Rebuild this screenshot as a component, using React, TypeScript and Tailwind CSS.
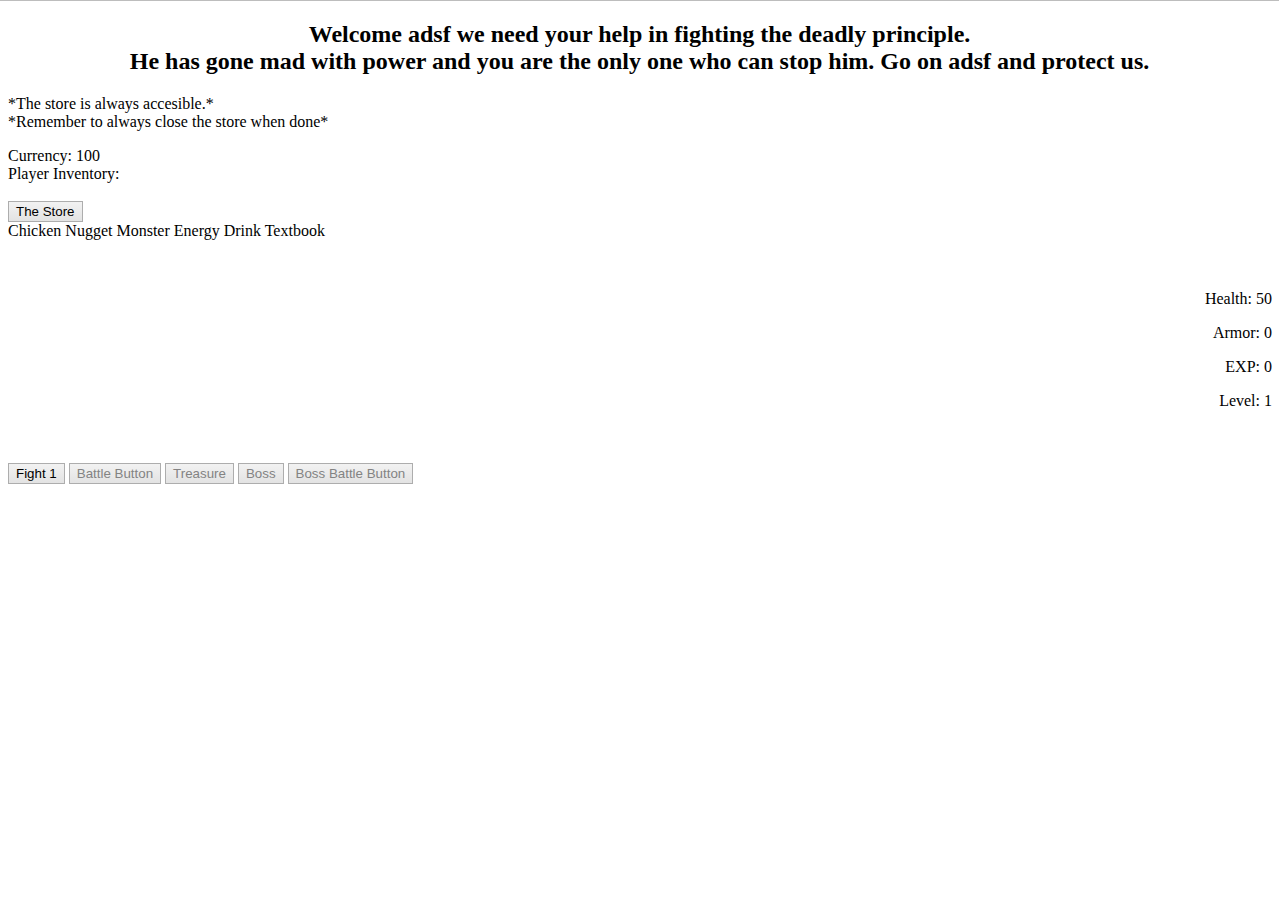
function Btn({ label, disabled }: { label: string; disabled?: boolean }) {
  return (
    <button
      disabled={disabled}
      className={
        disabled
          ? "h-[21px] px-[7px] border border-[#adadad] bg-gradient-to-b from-[#f2f2f2] to-[#e3e3e3] text-[13.333px] leading-[15px] text-[#838383] align-top"
          : "h-[21px] px-[7px] border border-[#adadad] bg-gradient-to-b from-[#f2f2f2] to-[#e3e3e3] text-[13.333px] leading-[15px] text-black align-top"
      }
      style={{ fontFamily: '"Liberation Sans", Arial, sans-serif' }}
    >
      {label}
    </button>
  );
}

export default function App() {
  const stats = ["Health: 50", "Armor: 0", "EXP: 0", "Level: 1"];

  return (
    <div
      className="min-h-[918px] border-t border-[#bdbdbd] bg-white px-2 text-[16px] leading-[18px] text-black"
      style={{ fontFamily: '"Liberation Serif", "Times New Roman", serif' }}
    >
      <h2 className="pt-[20px] text-center text-[24px] font-bold leading-[27px]">
        Welcome adsf we need your help in fighting the deadly principle.
        <br />
        He has gone mad with power and you are the only one who can stop him. Go on adsf and protect us.
      </h2>

      <p className="mt-[20px]">
        *The store is always accesible.*
        <br />
        *Remember to always close the store when done*
      </p>

      <p className="mt-4">
        Currency: 100
        <br />
        Player Inventory:
      </p>

      <div className="mt-[18px] flex gap-1">
        <Btn label="The Store" />
      </div>
      <div>Chicken Nugget Monster Energy Drink Textbook</div>

      <div className="mt-[50px] -mr-px flex flex-col gap-4 text-right">
        {stats.map((s) => (
          <p key={s}>{s}</p>
        ))}
      </div>

      <div className="mt-[53px] flex gap-1">
        <Btn label="Fight 1" />
        <Btn label="Battle Button" disabled />
        <Btn label="Treasure" disabled />
        <Btn label="Boss" disabled />
        <Btn label="Boss Battle Button" disabled />
      </div>
    </div>
  );
}
